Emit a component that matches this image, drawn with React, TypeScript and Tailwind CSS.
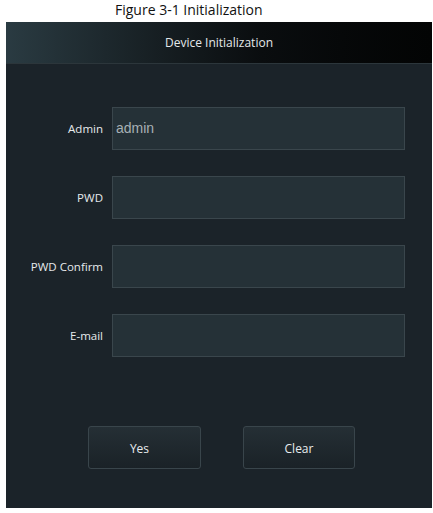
import React, { useState } from 'react';

const fields = [
  { label: 'Admin', value: 'admin' },
  { label: 'PWD', value: '' },
  { label: 'PWD Confirm', value: '' },
  { label: 'E-mail', value: '' },
];

export default function App() {
  const [values, setValues] = useState(fields.map((f) => f.value));

  return (
    <div className="w-[433px] h-[513px] bg-white font-['Open_Sans',sans-serif]">
      <p className="h-[22px] pl-[115px] pt-[1px] text-[14px] leading-[18px] text-[#111]">Figure 3-1 Initialization</p>

      {/* Panel */}
      <div className="ml-[6px] w-[426px] h-[486px] bg-[#1b2329] flex flex-col">
        <div className="h-[42px] flex items-center justify-center bg-gradient-to-r from-[#2a3b42] via-[#0a0d0f] via-60% to-[#030404] border-b border-[#2c363b]">
          <span className="text-[12px] text-[#e4e8ea] mt-[1px]">Device Initialization</span>
        </div>

        <div className="flex flex-col gap-[26px] pt-[43px]">
          {fields.map((f, i) => (
            <div key={f.label} className="flex items-center">
              <label className="w-[106px] text-right pr-[9px] text-[11.5px] text-[#e6eaec]">{f.label}</label>
              <input
                type={f.label.startsWith('PWD') ? 'password' : 'text'}
                value={values[i]}
                onChange={(e) => setValues(values.map((v, j) => (j === i ? e.target.value : v)))}
                className="w-[293px] h-[43px] bg-[#253137] border border-[#3a464c] px-[3px] pb-[2px] text-[14px] text-[#a7b0b4] font-['Liberation_Sans',sans-serif] outline-none"
              />
            </div>
          ))}
        </div>

        <div className="flex gap-[42px] pl-[82px] pt-[69px]">
          <button className="w-[113px] h-[43px] pr-[10px] pt-[2px] rounded-[3px] border border-[#39454b] bg-gradient-to-b from-[#252f35] to-[#1a2227] text-[12px] text-[#e8ecee]">
            Yes
          </button>
          <button className="w-[112px] h-[43px] pt-[2px] rounded-[3px] border border-[#39454b] bg-gradient-to-b from-[#252f35] to-[#1a2227] text-[12px] text-[#e8ecee]">
            Clear
          </button>
        </div>
      </div>
    </div>
  );
}
